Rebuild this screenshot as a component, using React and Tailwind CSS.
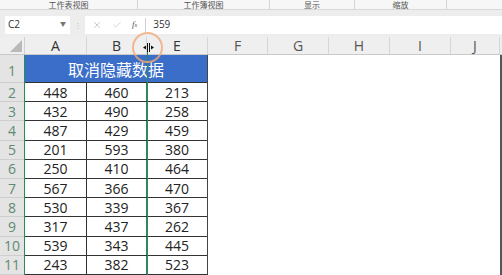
import { X, Check } from "lucide-react";

const cols = [
  { key: "A", w: 62, active: true },
  { key: "B", w: 60, active: true },
  { key: "E", w: 61, active: true },
  { key: "F", w: 60 },
  { key: "G", w: 61 },
  { key: "H", w: 61 },
  { key: "I", w: 61 },
  { key: "J", w: 49 },
];

const rows = [
  [448, 460, 213],
  [432, 490, 258],
  [487, 429, 459],
  [201, 593, 380],
  [250, 410, 464],
  [567, 366, 470],
  [530, 339, 367],
  [317, 437, 262],
  [539, 343, 445],
  [243, 382, 523],
];

const font = { fontFamily: '"Open Sans", "Noto Sans CJK SC", sans-serif' };

const RibbonLabel = ({ label, w }) => (
  <div
    className="flex items-center justify-center border-r border-[#d6d6d6] text-[8px] leading-none text-[#555]"
    style={{ width: w }}
  >
    {label}
  </div>
);

const App = () => {
  return (
    <div
      className="relative w-[502px] h-[275px] overflow-hidden bg-white"
      style={font}
    >
      {/* ribbon group labels */}
      <div className="flex h-[10px] bg-[#f7f7f7] border-b border-[#d8d8d8]">
        <RibbonLabel label="工作表视图" w={138} />
        <RibbonLabel label="工作簿视图" w={132} />
        <RibbonLabel label="显示" w={85} />
        <RibbonLabel label="缩放" w={92} />
        <div className="flex-1" />
      </div>

      {/* formula bar */}
      <div className="flex items-center h-[27px] bg-[#ededed] pl-[5px] pt-[4px] pb-[2px]">
        <div className="flex items-center justify-between w-[65px] h-[18px] bg-white pl-[3px] pr-[4px] text-[10px] text-[#333]">
          <span>C2</span>
          <span className="text-[6px] text-[#777]">▼</span>
        </div>
        <div className="w-[15px] flex justify-center text-[8px] text-[#bbb]">⋮</div>
        <div className="flex flex-1 items-center h-[18px] bg-white">
          <div className="flex items-center gap-[10px] pl-[7px] pr-[8px] h-full">
            <X size={10} strokeWidth={1.5} className="text-[#aaa]" />
            <Check size={10} strokeWidth={1.5} className="text-[#bbb]" />
            <span className="text-[9px] italic text-[#555]" style={{ fontFamily: '"Liberation Serif", serif' }}>
              f<span className="text-[6px]">x</span>
            </span>
          </div>
          <div className="w-px h-[14px] bg-[#d0d0d0]" />
          <span className="pl-[7px] text-[10px] text-[#333]">359</span>
        </div>
      </div>

      {/* column headers */}
      <div className="flex h-[18px] bg-[#efefef] border-b border-[#c9c9c9]">
        <div className="relative w-[25px] border-r border-[#d0d0d0]">
          <div className="absolute right-[2px] bottom-[2px] w-0 h-0 border-l-[12px] border-l-transparent border-b-[12px] border-b-[#b9b9b9]" />
        </div>
        {cols.map((c) => (
          <div
            key={c.key}
            className={`flex items-center justify-center border-r border-[#d6d6d6] text-[14px] ${
              c.active ? "text-[#333]" : "text-[#555]"
            }`}
            style={{ width: c.w }}
          >
            {c.key}
          </div>
        ))}
      </div>

      {/* sheet body */}
      <div className="flex">
        <div className="w-[25px] border-r border-[#2f8a5a] bg-[#e4e4e4]">
          <div className="flex items-end justify-center h-[28px] pb-[1px] border-b border-[#cfcfcf] text-[14px] text-[#5f8a73]">
            1
          </div>
          {rows.map((_, i) => (
            <div
              key={i}
              className="flex items-center justify-center h-[19.2px] border-b border-[#cfcfcf] text-[14px] text-[#5f8a73]"
            >
              {i + 2}
            </div>
          ))}
        </div>

        <div className="w-[183px] border-r border-[#444]">
          <div
            className="flex items-center justify-center h-[28px] bg-[#3a6ec8] text-white text-[16px] border-b border-[#333]"
            style={{ fontFamily: '"Noto Sans CJK SC", sans-serif' }}
          >
            取消隐藏数据
          </div>
          {rows.map((r, i) => (
            <div key={i} className="flex h-[19.2px] border-b border-[#333] text-[14px] text-[#222]">
              <div className="flex w-[62px] items-center justify-center border-r border-[#333]">{r[0]}</div>
              <div className="flex w-[60px] items-center justify-center border-r border-[#2f8a5a]">{r[1]}</div>
              <div className="flex flex-1 items-center justify-center">{r[2]}</div>
            </div>
          ))}
        </div>

        <div className="flex-1 border-r-2 border-[#555]" />
      </div>

      {/* drag guide line across the hidden column */}
      <div className="absolute left-[147px] top-[51px] bottom-0 w-px bg-[#2f8a5a]" />

      {/* resize cursor with highlight ring */}
      <div className="absolute left-[132px] top-[32px] w-[31px] h-[31px] rounded-full border-2 border-[#f2a878]/80" />
      <svg className="absolute left-[143px] top-[43px]" width="11" height="9" viewBox="0 0 11 9">
        <rect x="4" y="0" width="1" height="9" fill="#111" />
        <rect x="6" y="0" width="1" height="9" fill="#111" />
        <path d="M0 4.5 L3 2.5 L3 6.5 Z" fill="#111" />
        <path d="M11 4.5 L8 2.5 L8 6.5 Z" fill="#111" />
      </svg>
    </div>
  );
};

export default App;
